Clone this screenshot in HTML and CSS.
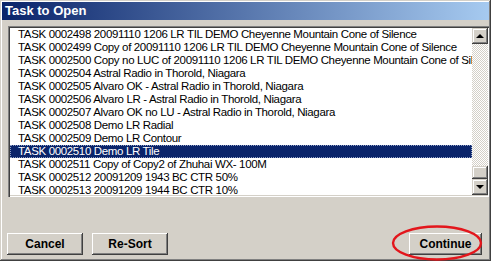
FILE: index.html
```html
<!DOCTYPE html>
<html lang="en">
<head>
    <meta charset="UTF-8">
    <title>Task to Open</title>
    <link rel="stylesheet" href="styles.css">
</head>
<body>
    <div class="window">
        <div class="titlebar">Task to Open</div>
        <div class="content">
            <div class="listbox">
                <ul class="items">
                    <li>TASK 0002498 20091110 1206 LR TIL DEMO Cheyenne Mountain Cone of Silence</li>
                    <li>TASK 0002499 Copy of 20091110 1206 LR TIL DEMO Cheyenne Mountain Cone of Silence</li>
                    <li>TASK 0002500 Copy no LUC of 20091110 1206 LR TIL DEMO Cheyenne Mountain Cone of Silence</li>
                    <li>TASK 0002504 Astral Radio in Thorold, Niagara</li>
                    <li>TASK 0002505 Alvaro OK - Astral Radio in Thorold, Niagara</li>
                    <li>TASK 0002506 Alvaro LR - Astral Radio in Thorold, Niagara</li>
                    <li>TASK 0002507 Alvaro OK no LU - Astral Radio in Thorold, Niagara</li>
                    <li>TASK 0002508 Demo LR Radial</li>
                    <li>TASK 0002509 Demo LR Contour</li>
                    <li class="selected">TASK 0002510 Demo LR Tile</li>
                    <li>TASK 0002511 Copy of Copy2 of Zhuhai WX- 100M</li>
                    <li>TASK 0002512 20091209 1943 BC CTR 50%</li>
                    <li>TASK 0002513 20091209 1944 BC CTR 10%</li>
                </ul>
                <div class="scrollbar">
                    <div class="sb-btn"><span class="arrow-up"></span></div>
                    <div class="track"></div>
                    <div class="sb-btn thumb"></div>
                    <div class="sb-btn"><span class="arrow-down"></span></div>
                </div>
            </div>
            <div class="buttons">
                <button>Cancel</button>
                <button>Re-Sort</button>
                <span class="spacer"></span>
                <button class="continue">Continue</button>
            </div>
        </div>
        <svg class="circle" width="96" height="40" viewBox="0 0 96 40">
            <ellipse cx="47" cy="19" rx="44" ry="16.5" fill="none" stroke="#e3161c" stroke-width="2.4"/>
        </svg>
    </div>
</body>
</html>
```

FILE: styles.css
```css
body {
    margin: 0;
    font-family: "Liberation Sans", Arial, sans-serif;
}
.window {
    position: relative;
    width: 491px;
    height: 261px;
    box-sizing: border-box;
    padding: 2px;
    background-color: #d4d0c8;
    box-shadow: inset -1px -1px #404040, inset 1px 1px #d4d0c8,
                inset -2px -2px #808080, inset 2px 2px #fff;
    display: flex;
    flex-direction: column;
}
.titlebar {
    height: 18px;
    line-height: 18px;
    padding-left: 3px;
    color: #fff;
    font-weight: bold;
    font-size: 13px;
    background: linear-gradient(to right, #0a246a, #a6caf0);
}
.content {
    flex: 1;
    display: flex;
    flex-direction: column;
    padding: 6px 0 4px 6px;
}
.listbox {
    display: flex;
    height: 171px;
    box-sizing: border-box;
    padding: 2px 1px 2px 2px;
    background-color: #fff;
    box-shadow: inset 1px 1px #808080, inset 2px 2px #404040,
                inset -1px -1px #fff, inset -2px -2px #d4d0c8;
}
.items {
    flex: 1;
    list-style: none;
    margin: 0;
    padding: 0;
    overflow: hidden;
    font-size: 11.5px;
    letter-spacing: -0.35px;
}
.items li {
    height: 13px;
    line-height: 13px;
    padding-left: 8px;
    white-space: nowrap;
}
.items li.selected {
    background-color: #0a246a;
    color: #fff;
    outline: 1px dotted #8e9ec4;
    outline-offset: -1px;
}
.scrollbar {
    width: 16px;
    display: flex;
    flex-direction: column;
}
.sb-btn {
    height: 16px;
    flex-shrink: 0;
    background-color: #d4d0c8;
    box-shadow: inset -1px -1px #404040, inset 1px 1px #d4d0c8,
                inset -2px -2px #808080, inset 2px 2px #fff;
    display: flex;
    align-items: center;
    justify-content: center;
}
.sb-btn.thumb {
    height: 13px;
}
.track {
    flex: 1;
    background: repeating-conic-gradient(#fff 0 25%, #d4d0c8 0 50%) 0 0 / 2px 2px;
}
.arrow-up, .arrow-down {
    width: 0;
    height: 0;
    border-left: 4px solid transparent;
    border-right: 4px solid transparent;
}
.arrow-up {
    border-bottom: 4px solid #000;
}
.arrow-down {
    border-top: 4px solid #000;
}
.buttons {
    margin-top: auto;
    display: flex;
    gap: 9px;
    margin-left: -1px;
    padding-right: 7px;
}
.spacer {
    flex: 1;
}
button {
    width: 76px;
    height: 22px;
    padding: 0;
    border: none;
    background-color: #d4d0c8;
    font-family: "Liberation Sans", Arial, sans-serif;
    font-weight: bold;
    font-size: 12px;
    color: #000;
    box-shadow: inset -1px -1px #404040, inset 1px 1px #fff,
                inset -2px -2px #808080, inset 2px 2px #d4d0c8;
}
button.continue {
    width: 73px;
}
.circle {
    position: absolute;
    left: 390px;
    top: 224px;
}
```
